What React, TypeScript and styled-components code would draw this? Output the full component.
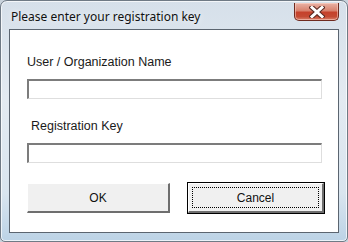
import React from 'react';
import styled, { createGlobalStyle } from 'styled-components';

const GlobalStyle = createGlobalStyle`
  html, body {
    margin: 0;
    padding: 0;
    background: #c9d3dc;
  }
`

const Window = styled.div`
  box-sizing: border-box;
  width: 348px;
  height: 242px;
  display: flex;
  flex-direction: column;
  padding: 0 8px 8px 8px;
  border: 1px solid #6f7a85;
  border-radius: 7px 7px 5px 5px;
  background: linear-gradient(180deg, #d6e0ea 0%, #e3eaf1 40%, #d9e5ef 80%, #bcd3e6 100%);
  box-shadow: inset 0 0 0 1px rgba(255, 255, 255, 0.7);
`

const TitleBar = styled.div`
  height: 28px;
  display: flex;
  justify-content: space-between;
  align-items: flex-start;
`

const Title = styled.span`
  margin-left: 2px;
  margin-top: 8px;
  font-family: "Noto Sans", "Open Sans", sans-serif;
  font-size: 12px;
  line-height: 16px;
  color: #111;
  text-shadow: 0 0 6px rgba(255, 255, 255, 0.9);
`

const CloseButton = styled.div`
  margin-top: 2px;
  margin-right: 0;
  width: 43px;
  height: 17px;
  display: flex;
  align-items: center;
  justify-content: center;
  border: 1px solid #6e2a1f;
  border-top: none;
  border-radius: 0 0 5px 5px;
  background: linear-gradient(180deg, #eab3a6 0%, #d8826e 45%, #c5412b 55%, #c44a33 80%, #d9806a 100%);
  box-shadow: inset 0 0 0 1px rgba(255, 220, 210, 0.5);
`

const Client = styled.div`
  flex: 1;
  display: flex;
  flex-direction: column;
  background: #fff;
  border: 1px solid #5b6570;
  padding: 25px 0 0 17px;
`

const Label = styled.span<{ $indent?: number }>`
  margin-left: ${p => p.$indent ?? 0}px;
  font-family: "Liberation Sans", Arial, sans-serif;
  font-size: 12.5px;
  line-height: 14px;
  color: #1a1a1a;
`

const TextBox = styled.div<{ $gap: number }>`
  box-sizing: border-box;
  width: 295px;
  height: 20px;
  margin-top: 10px;
  margin-bottom: ${p => p.$gap}px;
  background: #fff;
  border-top: 2px solid #7c7c7c;
  border-left: 2px solid #7c7c7c;
  border-right: 1px solid #dedede;
  border-bottom: 1px solid #dedede;
`

const ButtonRow = styled.div`
  display: flex;
  gap: 18px;
`

const Button = styled.div<{ $w: number; $focused?: boolean }>`
  box-sizing: border-box;
  width: ${p => p.$w}px;
  height: 30px;
  display: flex;
  align-items: center;
  justify-content: center;
  background: #f0f0f0;
  font-family: "Liberation Sans", Arial, sans-serif;
  font-size: 12px;
  color: #111;
  border-top: 1px solid #ffffff;
  border-left: 1px solid #ffffff;
  border-right: 2px solid #6e6e6e;
  border-bottom: 2px solid #6e6e6e;
  box-shadow: ${p => (p.$focused ? '0 0 0 1px #000' : 'none')};
  position: relative;
`

const FocusRect = styled.span`
  position: absolute;
  inset: 3px 3px 3px 3px;
  border: 1px dotted #000;
`

const CloseGlyph = () => (
  <svg width="16" height="12" viewBox="0 0 16 12">
    <path d="M3 1.5 L13 10.5 M13 1.5 L3 10.5" stroke="#5a2a22" strokeWidth="5" strokeLinecap="square" />
    <path d="M3 1.5 L13 10.5 M13 1.5 L3 10.5" stroke="#fff" strokeWidth="3" strokeLinecap="square" />
  </svg>
);

const App: React.FC = () => {
  return (
    <>
      <GlobalStyle />
      <Window>
        <TitleBar>
          <Title>Please enter your registration key</Title>
          <CloseButton>
            <CloseGlyph />
          </CloseButton>
        </TitleBar>
        <Client>
          <Label>User / Organization Name</Label>
          <TextBox $gap={20} />
          <Label $indent={4}>Registration Key</Label>
          <TextBox $gap={20} />
          <ButtonRow>
            <Button $w={143}>OK</Button>
            <Button $w={136} $focused>
              <FocusRect />
              Cancel
            </Button>
          </ButtonRow>
        </Client>
      </Window>
    </>
  );
};

export default App;
